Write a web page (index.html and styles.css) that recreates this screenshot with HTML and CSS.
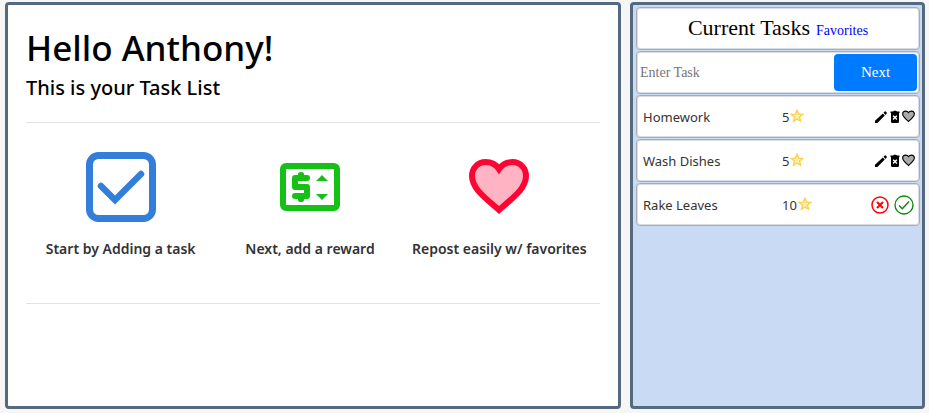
FILE: index.html
```html
<!DOCTYPE html>
<html lang="en">
<head>
<meta charset="utf-8">
<meta name="viewport" content="width=device-width, initial-scale=1">
<title>Task List</title>
<link rel="stylesheet" href="styles.css">
</head>
<body>
<svg class="sprite" aria-hidden="true">
  <symbol id="star" viewBox="0 0 14 14"><path d="M7 1.2 8.6 5.1 12.8 5.4 9.6 8.1 10.6 12.3 7 10 3.4 12.3 4.4 8.1 1.2 5.4 5.4 5.1Z" fill="#ffedb0" stroke="#fdd044" stroke-width="1.3"/></symbol>
  <symbol id="pencil" viewBox="0 0 14 14"><path d="M1 13V10.700L8.800 3.400 10.800 5.500 3.400 13ZM9.500 2.800 10.700 1.600Q11.200 1.100 11.700 1.600L12.700 2.600Q13.200 3.100 12.700 3.600L11.500 4.900Z"/></symbol>
  <symbol id="trash" viewBox="0 0 14 14"><path fill-rule="evenodd" d="M2.500 1.400H5L6 .8H8L9 1.400H11.500V3H2.500ZM3 3H11V11.500Q11 13 9.600 13H4.400Q3 13 3 11.500ZM4.600 6.200 6 7.600 4.600 9 5.600 10 7 8.600 8.400 10 9.400 9 8 7.600 9.400 6.200 8.400 5.200 7 6.600 5.600 5.200Z"/></symbol>
  <symbol id="heart" viewBox="0 0 60 56"><path d="M30 51C15 38 3 29 3 17 3 9 9 3 16.500 3 22 3 27 5.500 30 10 33 5.500 38 3 43.500 3 51 3 57 9 57 17 57 29 45 38 30 51Z"/></symbol>
</svg>
<div class="app">
  <main class="panel welcome">
    <h1>Hello Anthony!</h1>
    <h2>This is your Task List</h2>
    <hr>
    <div class="steps">
      <section class="step">
        <div class="art"><svg width="70" height="70" viewBox="0 0 70 70" fill="none" stroke="#337edb" aria-hidden="true"><rect x="3.500" y="3.500" width="63" height="63" rx="9" stroke-width="7"/><path d="M15 34 29 48 55 22" stroke-width="6.500" stroke-linecap="round"/></svg></div>
        <p>Start by Adding a task</p>
      </section>
      <section class="step">
        <div class="art"><svg width="60" height="48" viewBox="0 0 60 48" fill="#17c017" aria-hidden="true"><rect x="3" y="3" width="54" height="42" rx="3" fill="none" stroke="#17c017" stroke-width="6"/><path d="M18 12V11Q18 9 21 9T24 11V12H27Q30 12 30 15T27 18H18V21H27Q30 21 30 24V33Q30 36 27 36H24V37Q24 39 21 39T18 37V36H15Q12 36 12 33T15 30H24V27H15Q12 27 12 24V15Q12 12 15 12ZM36 18 42 12 48 18ZM36 31H48L42 37Z"/></svg></div>
        <p>Next, add a reward</p>
      </section>
      <section class="step">
        <div class="art"><svg class="love" width="60" height="56" aria-hidden="true"><use href="#heart"/></svg></div>
        <p>Repost easily w/ favorites</p>
      </section>
    </div>
    <hr>
  </main>
  <aside class="panel tasks">
    <header class="card heading"><h3>Current Tasks</h3><a href="#favorites">Favorites</a></header>
    <form class="card entry">
      <input type="text" placeholder="Enter Task" aria-label="Enter Task">
      <button type="button">Next</button>
    </form>
    <article class="card task">
      <span>Homework</span>
      <span class="points">5<svg width="14" height="14"><use href="#star"/></svg></span>
      <span class="actions">
        <button type="button" aria-label="Edit"><svg width="14" height="14"><use href="#pencil"/></svg></button>
        <button type="button" aria-label="Delete"><svg width="14" height="14"><use href="#trash"/></svg></button>
        <button type="button" aria-label="Favorite"><svg class="fav" width="13" height="13"><use href="#heart"/></svg></button>
      </span>
    </article>
    <article class="card task">
      <span>Wash Dishes</span>
      <span class="points">5<svg width="14" height="14"><use href="#star"/></svg></span>
      <span class="actions">
        <button type="button" aria-label="Edit"><svg width="14" height="14"><use href="#pencil"/></svg></button>
        <button type="button" aria-label="Delete"><svg width="14" height="14"><use href="#trash"/></svg></button>
        <button type="button" aria-label="Favorite"><svg class="fav" width="13" height="13"><use href="#heart"/></svg></button>
      </span>
    </article>
    <article class="card task">
      <span>Rake Leaves</span>
      <span class="points">10<svg width="14" height="14"><use href="#star"/></svg></span>
      <span class="actions confirm">
        <button type="button" aria-label="Reject"><svg width="18" height="18" viewBox="0 0 18 18" fill="none" stroke="#f00"><circle cx="9" cy="9" r="8" stroke-width="1.500"/><path d="M6 6 12 12M12 6 6 12" stroke-width="2"/></svg></button>
        <button type="button" aria-label="Approve"><svg width="20" height="20" viewBox="0 0 20 20" fill="none" stroke="#0a850a"><circle cx="10" cy="10" r="9" stroke-width="1.300"/><path d="M5 10.500 8.300 13.800 15 6.500" stroke-width="1.400"/></svg></button>
      </span>
    </article>
  </aside>
</div>
</body>
</html>
```

FILE: styles.css
```css
* {
  box-sizing: border-box;
}

body {
  margin: 0;
  background: #f6f6f6;
  color: #000;
  font-family: "Liberation Serif", serif;
}

.sprite {
  display: none;
}

.app {
  display: grid;
  grid-template-columns: 616fr 295fr;
  gap: 9px;
  min-height: 100vh;
  padding: 2px 4px 4px 5px;
}

.panel {
  border: 3px solid #566a7f;
  border-radius: 4px;
}

.welcome {
  padding: 18px;
  background: #fff;
  font-family: "Noto Sans", sans-serif;
}

h1,
h2,
h3,
p {
  margin: 0;
}

h1 {
  font-size: 35px;
  font-weight: 500;
  line-height: 49px;
}

h2 {
  font-size: 20px;
  font-weight: 500;
  line-height: 31px;
}

hr {
  margin: 19px 0 0;
  border: 0;
  border-top: 1px solid #e3e3e3;
}

.steps {
  display: grid;
  grid-template-columns: repeat(3, 1fr);
  padding: 29px 6px 25px 0;
}

.step {
  color: #333;
  font-size: 14px;
  font-weight: 600;
  line-height: 20px;
  text-align: center;
  white-space: nowrap;
}

.step p {
  margin: 17px -8px 0;
}

.art {
  display: flex;
  align-items: center;
  justify-content: center;
  height: 70px;
}

.love {
  fill: #ffb3c3;
  stroke: #ff0433;
  stroke-width: 6px;
}

.tasks {
  display: flex;
  flex-direction: column;
  gap: 1px;
  padding: 2px 2px 2px 3px;
  background: #c9dbf4;
}

.card {
  height: 43px;
  border: 1px solid #a9abb0;
  border-radius: 4px;
  background: #fff;
  box-shadow: inset 0 0 0 1px #dcdde0;
}

.heading {
  display: flex;
  align-items: baseline;
  justify-content: center;
  gap: 6px;
  line-height: 40px;
}

h3 {
  font-size: 22px;
  font-weight: 400;
}

a {
  color: #00f;
  font-size: 14px;
  text-decoration: none;
}

button {
  padding: 0;
  border: 0;
  background: none;
}

.entry {
  display: flex;
  padding: 2px;
}

.entry input {
  flex: 1;
  min-width: 0;
  padding: 0 1px;
  border: 0;
  background: none;
  font: 14px "Liberation Serif", serif;
}

.entry button {
  width: 83px;
  border-radius: 4px;
  background: #007bff;
  color: #fff;
  font: 15px "Liberation Serif", serif;
}

.task {
  display: grid;
  grid-template-columns: 139px 1fr auto;
  align-items: center;
  padding: 0 4px 0 6px;
  color: #333;
  font: 13px "Noto Sans", sans-serif;
}

.points,
.actions {
  display: flex;
  align-items: center;
}

.points {
  gap: 1px;
}

.points svg {
  margin-bottom: 2px;
}

.actions svg {
  display: block;
}

.confirm {
  gap: 5px;
  padding-right: 1px;
}

.fav {
  fill: #aaa;
  stroke: #000;
  stroke-width: 5px;
}
```
